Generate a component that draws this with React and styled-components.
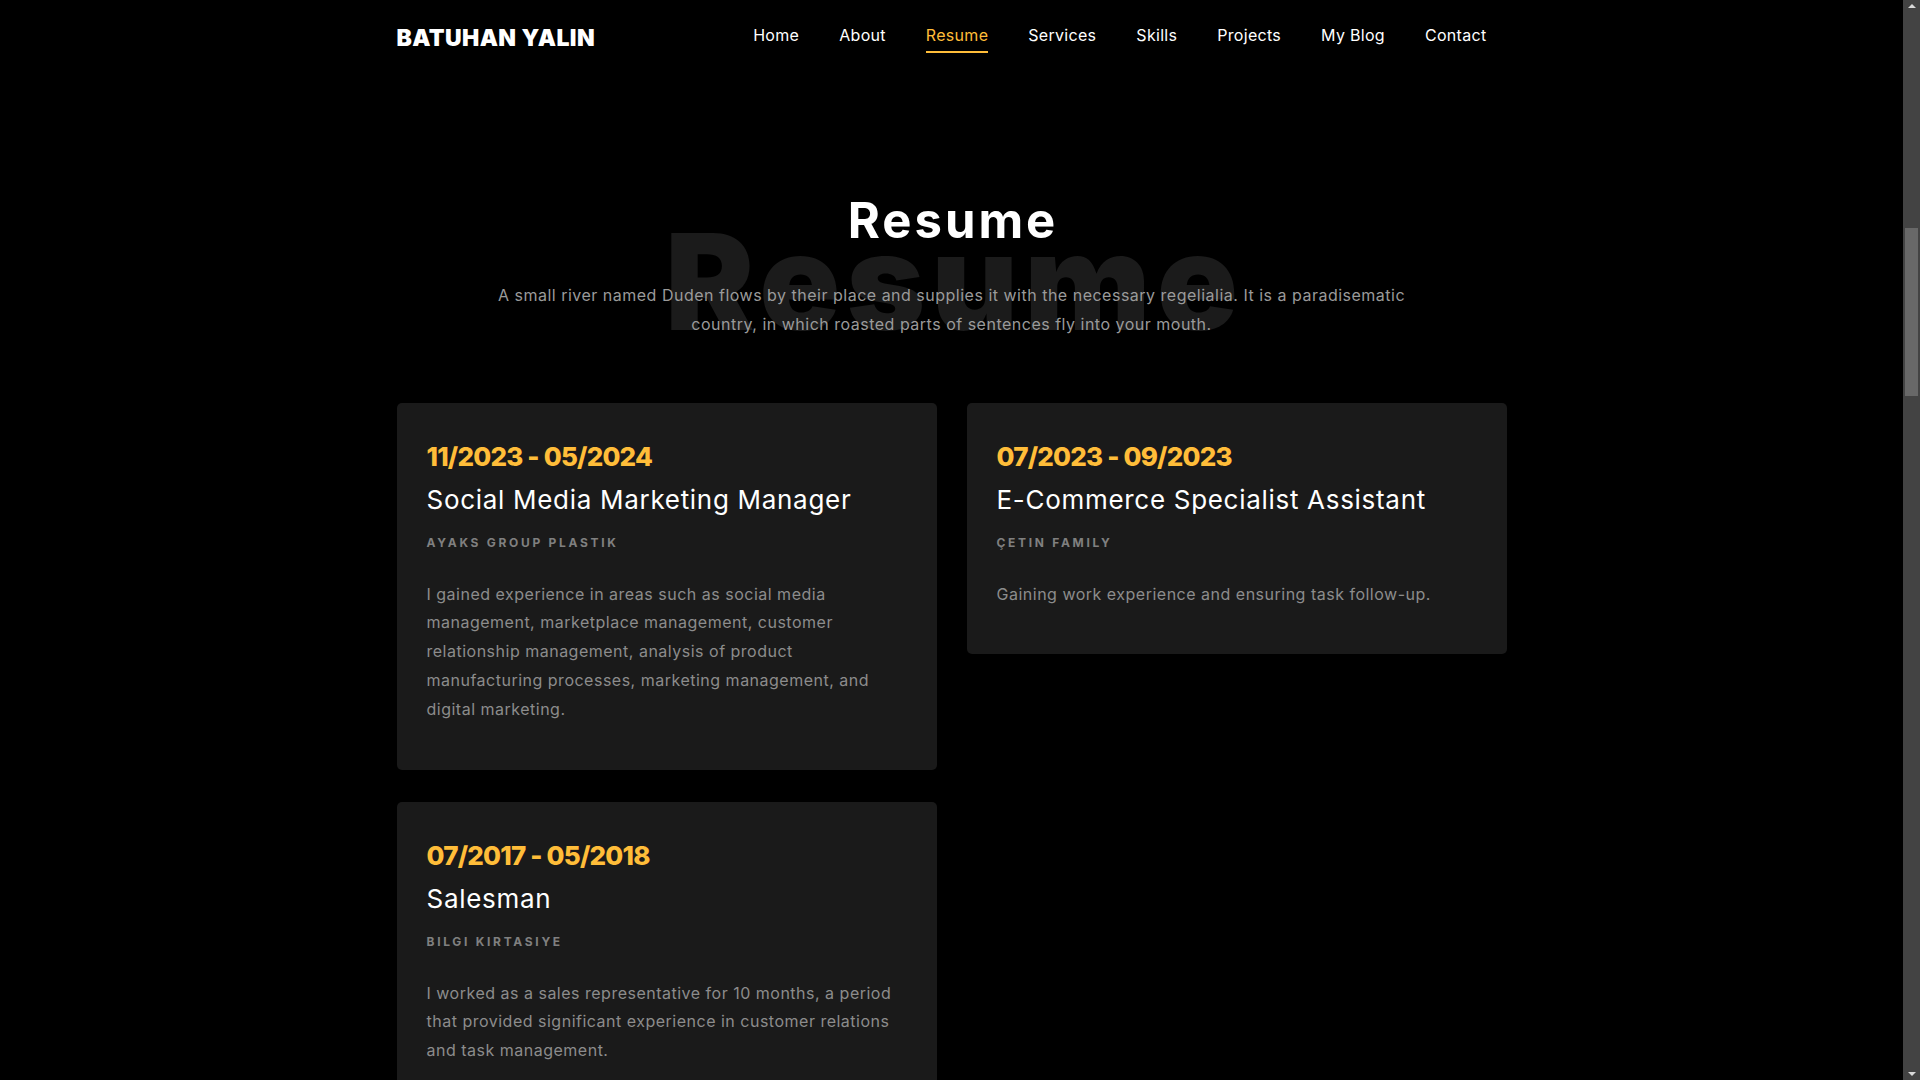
import React from 'react';
import styled, { createGlobalStyle } from 'styled-components';

const GlobalStyle = createGlobalStyle`
  html { color-scheme: dark; background: #000; }
  html, body { margin: 0; padding: 0; }
  body {
    background: #000;
    font-family: Inter, "Noto Sans", sans-serif;
    color: #999;
    -webkit-font-smoothing: antialiased;
  }
  *, *::before, *::after { box-sizing: border-box; }
`;

const Frame = styled.div`
  display: flex;
  align-items: flex-start;
`;

const Main = styled.main`
  flex: 1;
  min-width: 0;
`;

const ScrollRail = styled.div`
  flex: 0 0 17px;
  position: sticky;
  top: 0;
  height: 100vh;
  background: #434343;
  display: flex;
  flex-direction: column;
  align-items: center;
`;

const RailArrow = styled.span`
  flex: 0 0 17px;
  display: flex;
  align-items: ${(p) => (p.$down ? 'flex-end' : 'flex-start')};
  padding: 4px 0;
  justify-content: center;

  &::before {
    content: '';
    width: 0;
    height: 0;
    border-left: 4px solid transparent;
    border-right: 4px solid transparent;
    ${(p) =>
      p.$down
        ? 'border-top: 4px solid #d8d8d8;'
        : 'border-bottom: 4px solid #d8d8d8;'}
  }
`;

const RailTrack = styled.div`
  flex: 1;
  width: 100%;
  padding: 211px 2px 0;
`;

const RailThumb = styled.div`
  height: 168px;
  background: #686868;
`;

const Container = styled.div`
  width: 1140px;
  margin: 0 auto;
  padding: 0 15px;
`;

const Header = styled.header`
  background: #000;
`;

const HeaderInner = styled(Container)`
  height: 70px;
  display: flex;
  align-items: center;
  justify-content: space-between;
`;

const Logo = styled.a`
  font-family: Inter, sans-serif;
  font-weight: 900;
  font-size: 23px;
  line-height: 1;
  letter-spacing: 0.4px;
  color: #fff;
  text-transform: uppercase;
  text-decoration: none;
  padding-top: 6px;
`;

const Nav = styled.nav`
  display: flex;
  align-items: center;
`;

const NavLink = styled.a`
  position: relative;
  padding: 0 20px;
  font-size: 16px;
  line-height: 24px;
  font-weight: 400;
  letter-spacing: 0.3px;
  color: ${(p) => (p.$active ? '#ffbd39' : '#fff')};
  text-decoration: none;

  &::after {
    content: '';
    display: ${(p) => (p.$active ? 'block' : 'none')};
    position: absolute;
    left: 20px;
    right: 20px;
    bottom: -6px;
    height: 2px;
    background: #ffbd39;
  }
`;

const Section = styled.section`
  padding: 122px 0 60px;
`;

const Heading = styled.div`
  position: relative;
  text-align: center;
  margin-bottom: 64px;
`;

const BigWord = styled.span`
  position: absolute;
  top: 22px;
  left: 0;
  right: 0;
  padding-left: 6px;
  font-size: 134px;
  font-weight: 900;
  line-height: 1;
  letter-spacing: 6px;
  color: #1b1b1b;
  pointer-events: none;
`;

const Title = styled.h2`
  position: relative;
  margin: 0;
  padding-left: 3px;
  font-size: 49px;
  line-height: 57.6px;
  font-weight: 700;
  letter-spacing: 3px;
  color: #fff;
`;

const Lead = styled.p`
  position: relative;
  margin: 31px auto 0;
  max-width: 930px;
  font-size: 16px;
  line-height: 29px;
  letter-spacing: 0.5px;
  color: #9a9a9a;
`;

const Grid = styled.div`
  display: grid;
  grid-template-columns: 1fr 1fr;
  column-gap: 30px;
  row-gap: 32px;
  align-items: start;
`;

const Card = styled.div`
  background: #1a1a1a;
  border-radius: 5px;
  padding: 34px 30px 46px;
`;

const DateRange = styled.span`
  display: block;
  font-size: 26px;
  line-height: 39px;
  font-weight: 800;
  letter-spacing: -0.8px;
  color: #ffbd39;
`;

const Role = styled.h2`
  margin: 4px 0 0;
  font-size: 26px;
  line-height: 39px;
  font-weight: 400;
  letter-spacing: 0.7px;
  color: #fff;
`;

const Company = styled.span`
  display: block;
  margin-top: 15px;
  font-size: 12px;
  line-height: 18px;
  font-weight: 700;
  letter-spacing: 2.7px;
  text-transform: uppercase;
  color: #808080;
`;

const Desc = styled.p`
  margin: 28px 0 0;
  font-size: 16px;
  line-height: 1.8;
  letter-spacing: 0.5px;
  color: #8c8c8c;
`;

const links = ['Home', 'About', 'Resume', 'Services', 'Skills', 'Projects', 'My Blog', 'Contact'];

const jobs = [
  {
    date: '11/2023 - 05/2024',
    role: 'Social Media Marketing Manager',
    company: 'Ayaks Group Plastik',
    desc: 'I gained experience in areas such as social media management, marketplace management, customer relationship management, analysis of product manufacturing processes, marketing management, and digital marketing.',
  },
  {
    date: '07/2023 - 09/2023',
    role: 'E-Commerce Specialist Assistant',
    company: 'Çetin Family',
    desc: 'Gaining work experience and ensuring task follow-up.',
  },
  {
    date: '07/2017 - 05/2018',
    role: 'Salesman',
    company: 'Bilgi Kirtasiye',
    desc: 'I worked as a sales representative for 10 months, a period that provided significant experience in customer relations and task management.',
  },
];

export default function App() {
  return (
    <>
      <GlobalStyle />
      <Frame>
        <Main>
          <Header>
            <HeaderInner>
              <Logo href="#">Batuhan Yalin</Logo>
              <Nav>
                {links.map((l) => (
                  <NavLink key={l} href="#" $active={l === 'Resume'}>
                    {l}
                  </NavLink>
                ))}
              </Nav>
            </HeaderInner>
          </Header>
          <Section>
            <Container>
              <Heading>
                <BigWord aria-hidden="true">Resume</BigWord>
                <Title>Resume</Title>
                <Lead>
                  A small river named Duden flows by their place and supplies it with the necessary regelialia. It is a paradisematic country, in which roasted parts of sentences fly into your mouth.
                </Lead>
              </Heading>
              <Grid>
                {jobs.map((j) => (
                  <Card key={j.date}>
                    <DateRange>{j.date}</DateRange>
                    <Role>{j.role}</Role>
                    <Company>{j.company}</Company>
                    <Desc>{j.desc}</Desc>
                  </Card>
                ))}
              </Grid>
            </Container>
          </Section>
        </Main>
        <ScrollRail aria-hidden="true">
          <RailArrow />
          <RailTrack>
            <RailThumb />
          </RailTrack>
          <RailArrow $down />
        </ScrollRail>
      </Frame>
    </>
  );
}
